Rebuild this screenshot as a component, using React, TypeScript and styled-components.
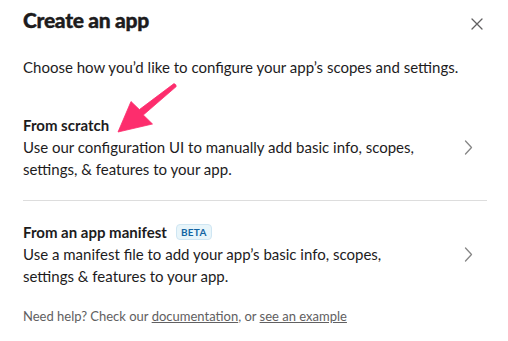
import React from "react";
import styled, { createGlobalStyle } from "styled-components";

const GlobalStyle = createGlobalStyle`
  html, body {
    margin: 0;
    padding: 0;
    background: #ffffff;
  }
  body {
    font-family: Lato, "Noto Sans", sans-serif;
    color: #1d1c1d;
    -webkit-font-smoothing: antialiased;
  }
`;

const Modal = styled.div`
  position: relative;
  width: 508px;
  height: 341px;
  box-sizing: border-box;
  padding: 0 21px 0 23px;
  overflow: hidden;
`;

const Header = styled.div`
  display: flex;
  justify-content: space-between;
  align-items: flex-start;
  padding-top: 6px;
`;

const Title = styled.h1`
  margin: 0;
  font-size: 21px;
  line-height: 28px;
  font-weight: 900;
  letter-spacing: -0.3px;
  -webkit-text-stroke: 0.4px #1d1c1d;
`;

const CloseButton = styled.button`
  margin-top: 8px;
  width: 20px;
  height: 20px;
  padding: 0;
  border: none;
  background: transparent;
  display: flex;
  align-items: center;
  justify-content: center;
  color: #616061;
`;

const Intro = styled.p`
  margin: 22px 0 0;
  font-size: 15px;
  line-height: 22px;
`;

const OptionList = styled.div`
  margin-top: 16px;
  display: flex;
  flex-direction: column;
`;

const Option = styled.div<{ $divider?: boolean }>`
  display: flex;
  align-items: center;
  justify-content: space-between;
  padding: 20px 14px 20px 0;
  border-bottom: ${(p) => (p.$divider ? "1px solid #dddddd" : "none")};
`;

const OptionText = styled.div`
  max-width: 400px;
  font-size: 15px;
  line-height: 22px;
`;

const OptionTitle = styled.div`
  display: flex;
  align-items: center;
  gap: 9px;
  font-weight: 700;
`;

const Badge = styled.span`
  display: inline-flex;
  align-items: center;
  height: 16px;
  padding: 0 4px;
  box-sizing: border-box;
  border: 1px solid #cfe6f3;
  border-radius: 4px;
  background: #e8f5fa;
  color: #1264a3;
  font-size: 10px;
  font-weight: 700;
  letter-spacing: 0.3px;
`;

const Footer = styled.p`
  margin: 0;
  font-size: 13px;
  line-height: 18px;
  color: #616061;
`;

const FooterLink = styled.a`
  color: #616061;
  text-decoration: underline;
`;

const Pointer = styled.svg`
  position: absolute;
  top: 0;
  left: 0;
  pointer-events: none;
`;

const Chevron = () => (
  <svg width="9" height="15" viewBox="0 0 9 15" fill="none">
    <path d="M1.5 1 L7.5 7.5 L1.5 14" stroke="#868686" strokeWidth="1.3" strokeLinecap="round" strokeLinejoin="round" />
  </svg>
);

export default function App() {
  return (
    <>
      <GlobalStyle />
      <Modal>
        <Header>
          <Title>Create an app</Title>
          <CloseButton aria-label="Close">
            <svg width="12" height="12" viewBox="0 0 12 12">
              <path d="M1 1 L11 11 M11 1 L1 11" stroke="#616061" strokeWidth="1.3" strokeLinecap="round" />
            </svg>
          </CloseButton>
        </Header>
        <Intro>Choose how you’d like to configure your app’s scopes and settings.</Intro>
        <OptionList>
          <Option $divider>
            <OptionText>
              <OptionTitle>From scratch</OptionTitle>
              Use our configuration UI to manually add basic info, scopes, settings, &amp; features to your app.
            </OptionText>
            <Chevron />
          </Option>
          <Option>
            <OptionText>
              <OptionTitle>
                From an app manifest
                <Badge>BETA</Badge>
              </OptionTitle>
              Use a manifest file to add your app’s basic info, scopes, settings &amp; features to your app.
            </OptionText>
            <Chevron />
          </Option>
        </OptionList>
        <Footer>
          Need help? Check our <FooterLink href="#">documentation</FooterLink>, or{" "}
          <FooterLink href="#">see an example</FooterLink>
        </Footer>
        <Pointer width="508" height="341" viewBox="0 0 508 341">
          <path
            d="M118 132 L131 101.5 L139.4 109.6 L174 83.6 Q176.5 84.5 176.2 86.6 L143.3 115 L152.5 124 Z"
            fill="#fd2d6d"
            stroke="#fd2d6d"
            strokeWidth="0.8"
            strokeLinejoin="round"
          />
        </Pointer>
      </Modal>
    </>
  );
}
